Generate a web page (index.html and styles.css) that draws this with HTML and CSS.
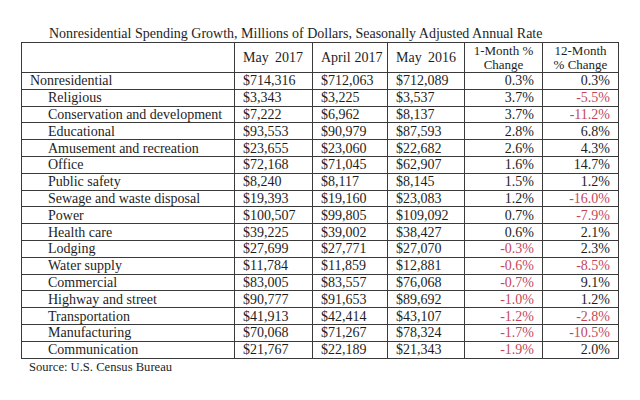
FILE: index.html
```html
<!DOCTYPE html>
<html>
<head>
<meta charset="utf-8">
<link rel="stylesheet" href="styles.css">
</head>
<body>
<div class="page">
  <div class="title">Nonresidential Spending Growth, Millions of Dollars, Seasonally Adjusted Annual Rate</div>
  <table class="data">
    <colgroup>
      <col class="c1"><col class="c2"><col class="c3"><col class="c4"><col class="c5"><col class="c6">
    </colgroup>
    <thead>
      <tr class="head">
        <th></th>
        <th class="hl"><span class="hd"><span>May</span><span>2017</span></span></th>
        <th class="hl"><span class="hd"><span>April</span><span>2017</span></span></th>
        <th class="hl"><span class="hd"><span>May</span><span>2016</span></span></th>
        <th class="hc"><span class="ln">1-Month %</span><span class="ln">Change</span></th>
        <th class="hc"><span class="ln">12-Month</span><span class="ln">% Change</span></th>
      </tr>
    </thead>
    <tbody>
      <tr><td class="name top">Nonresidential</td><td>$714,316</td><td>$712,063</td><td>$712,089</td><td class="num">0.3%</td><td class="num">0.3%</td></tr>
      <tr><td class="name">Religious</td><td>$3,343</td><td>$3,225</td><td>$3,537</td><td class="num">3.7%</td><td class="num neg">-5.5%</td></tr>
      <tr><td class="name">Conservation and development</td><td>$7,222</td><td>$6,962</td><td>$8,137</td><td class="num">3.7%</td><td class="num neg">-11.2%</td></tr>
      <tr><td class="name">Educational</td><td>$93,553</td><td>$90,979</td><td>$87,593</td><td class="num">2.8%</td><td class="num">6.8%</td></tr>
      <tr><td class="name">Amusement and recreation</td><td>$23,655</td><td>$23,060</td><td>$22,682</td><td class="num">2.6%</td><td class="num">4.3%</td></tr>
      <tr><td class="name">Office</td><td>$72,168</td><td>$71,045</td><td>$62,907</td><td class="num">1.6%</td><td class="num">14.7%</td></tr>
      <tr><td class="name">Public safety</td><td>$8,240</td><td>$8,117</td><td>$8,145</td><td class="num">1.5%</td><td class="num">1.2%</td></tr>
      <tr><td class="name">Sewage and waste disposal</td><td>$19,393</td><td>$19,160</td><td>$23,083</td><td class="num">1.2%</td><td class="num neg">-16.0%</td></tr>
      <tr><td class="name">Power</td><td>$100,507</td><td>$99,805</td><td>$109,092</td><td class="num">0.7%</td><td class="num neg">-7.9%</td></tr>
      <tr><td class="name">Health care</td><td>$39,225</td><td>$39,002</td><td>$38,427</td><td class="num">0.6%</td><td class="num">2.1%</td></tr>
      <tr><td class="name">Lodging</td><td>$27,699</td><td>$27,771</td><td>$27,070</td><td class="num neg">-0.3%</td><td class="num">2.3%</td></tr>
      <tr><td class="name">Water supply</td><td>$11,784</td><td>$11,859</td><td>$12,881</td><td class="num neg">-0.6%</td><td class="num neg">-8.5%</td></tr>
      <tr><td class="name">Commercial</td><td>$83,005</td><td>$83,557</td><td>$76,068</td><td class="num neg">-0.7%</td><td class="num">9.1%</td></tr>
      <tr><td class="name">Highway and street</td><td>$90,777</td><td>$91,653</td><td>$89,692</td><td class="num neg">-1.0%</td><td class="num">1.2%</td></tr>
      <tr><td class="name">Transportation</td><td>$41,913</td><td>$42,414</td><td>$43,107</td><td class="num neg">-1.2%</td><td class="num neg">-2.8%</td></tr>
      <tr><td class="name">Manufacturing</td><td>$70,068</td><td>$71,267</td><td>$78,324</td><td class="num neg">-1.7%</td><td class="num neg">-10.5%</td></tr>
      <tr><td class="name">Communication</td><td>$21,767</td><td>$22,189</td><td>$21,343</td><td class="num neg">-1.9%</td><td class="num">2.0%</td></tr>
    </tbody>
  </table>
  <div class="source">Source: U.S. Census Bureau</div>
</div>
</body>
</html>
```

FILE: styles.css
```css
html, body {
  margin: 0;
  padding: 0;
  background: #ffffff;
}
body {
  font-family: "Liberation Serif", "Times New Roman", serif;
  color: #1e1e1e;
}
.page {
  padding: 26px 0 0 21px;
}
.title {
  font-size: 14px;
  line-height: 16px;
  padding-left: 28px;
  white-space: nowrap;
}
.data {
  border-collapse: collapse;
  width: 597px;
  table-layout: fixed;
  font-size: 14px;
}
.c1 { width: 213px; }
.c2 { width: 78px; }
.c3 { width: 75px; }
.c4 { width: 77px; }
.c5 { width: 78px; }
.c6 { width: 76px; }
.data th, .data td {
  border: 1px solid #3a3a3a;
  padding: 0 8px;
  font-weight: normal;
  white-space: nowrap;
}
.data .head th {
  height: 29px;
  line-height: 14px;
  padding-top: 0;
  padding-bottom: 0;
}
.data .hl {
  text-align: left;
  vertical-align: middle;
  padding-top: 8px;
}
.hd {
  display: inline-flex;
  justify-content: space-between;
  gap: 4px;
  width: 60px;
}
.data .hc {
  font-size: 13px;
  text-align: center;
  vertical-align: middle;
}
.ln {
  display: block;
  height: 14px;
  line-height: 14px;
  overflow: visible;
}
.data td {
  height: 15.8px;
  line-height: 15px;
  vertical-align: middle;
}
.data .name {
  padding-left: 26px;
}
.data .name.top {
  padding-left: 8px;
}
.num {
  text-align: right;
}
.neg {
  color: #c4485a;
}
.source {
  font-size: 12.6px;
  line-height: 14px;
  padding: 1px 0 0 8px;
}
```
